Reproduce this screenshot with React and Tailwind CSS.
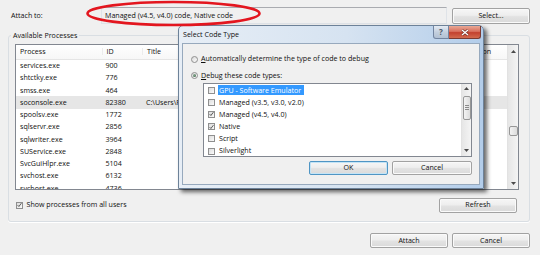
import React from "react";

const processes = [
  { name: "services.exe", id: "900" },
  { name: "shtctky.exe", id: "776" },
  { name: "smss.exe", id: "464" },
  { name: "soconsole.exe", id: "82380", title: "C:\\Users\\Public\\soconsole.exe", selected: true },
  { name: "spoolsv.exe", id: "1772" },
  { name: "sqlservr.exe", id: "2856" },
  { name: "sqlwriter.exe", id: "3964" },
  { name: "SUService.exe", id: "2848" },
  { name: "SvcGuiHlpr.exe", id: "5104" },
  { name: "svchost.exe", id: "6132" },
  { name: "svchost.exe", id: "4736" },
];

const codeTypes = [
  { label: "GPU - Software Emulator", checked: false, active: true },
  { label: "Managed (v3.5, v3.0, v2.0)", checked: false },
  { label: "Managed (v4.5, v4.0)", checked: true },
  { label: "Native", checked: true },
  { label: "Script", checked: false },
  { label: "Silverlight", checked: false },
];

const WinButton = ({ children, className = "", primary = false }) => (
  <div
    className={`flex items-center justify-center rounded-[2px] border ${
      primary
        ? "border-[#4f95c4] shadow-[inset_0_0_0_1px_#c4e4f6]"
        : "border-[#a2a2a2] shadow-[inset_0_0_0_1px_#fafafa]"
    } bg-[linear-gradient(#f6f6f6,#eeeeee_45%,#e2e2e2_55%,#dadada)] ${className}`}
  >
    {children}
  </div>
);

const Check = ({ checked }) => (
  <span className="flex items-center justify-center w-[7px] h-[7px] shrink-0 border border-[#8f8f8f] bg-[linear-gradient(135deg,#dcdcdc,#fbfbfb)]">
    {checked && (
      <svg width="6" height="6" viewBox="0 0 6 6">
        <path d="M0.8 3.2 L2.3 4.8 L5.3 0.8" stroke="#3a3a3a" strokeWidth="1" fill="none" />
      </svg>
    )}
  </span>
);

const Radio = ({ checked }) => (
  <span className="flex items-center justify-center w-[7px] h-[7px] shrink-0 rounded-full border border-[#8f8f8f] bg-[linear-gradient(135deg,#dadada,#fbfbfb)]">
    {checked && <span className="w-[3.5px] h-[3.5px] rounded-full bg-[radial-gradient(circle_at_35%_35%,#8fb59a,#2f5138)]" />}
  </span>
);

const Arrow = ({ down = false }) => (
  <svg width="5" height="3" viewBox="0 0 5 3">
    <path d={down ? "M0 0H5L2.5 3Z" : "M0 3H5L2.5 0Z"} fill="#4a4a4a" />
  </svg>
);

const ProcessList = () => (
  <div className="mt-[4px] ml-[6px] mr-[10px] h-[146px] flex border border-[#828790] bg-white overflow-hidden">
    <div className="flex-1 flex flex-col min-w-0">
      <div className="h-[14.5px] shrink-0 flex items-center border-b border-[#e5e5e5] bg-[linear-gradient(#ffffff,#f7f7f7)]">
        <span className="w-[85.5px] pl-[4px] shrink-0">Process</span>
        <span className="w-[40.5px] pl-[4px] shrink-0 border-l border-[#ececec]">ID</span>
        <span className="w-[319px] pl-[4px] shrink-0 border-l border-[#ececec]">Title</span>
        <span className="pl-[4px] shrink-0 border-l border-[#ececec]">Session</span>
      </div>
      {processes.map((p, i) => (
        <div
          key={i}
          className={`h-[12.25px] shrink-0 flex items-center whitespace-nowrap ${p.selected ? "bg-[#e6e6e6]" : ""}`}
        >
          <span className="w-[85.5px] pl-[4px] shrink-0">{p.name}</span>
          <span className="w-[40.5px] pl-[4px] shrink-0">{p.id}</span>
          <span className="pl-[4px]">{p.title || ""}</span>
        </div>
      ))}
    </div>
    <div className="w-[11px] shrink-0 flex flex-col bg-[linear-gradient(to_right,#e6e6e6,#f4f4f4)] border-l border-[#e2e2e2]">
      <div className="h-[12px] flex items-center justify-center">
        <Arrow />
      </div>
      <div className="flex-1">
        <div className="mt-[69px] mx-[0.5px] h-[9.5px] rounded-[2px] border border-[#979797] bg-[linear-gradient(to_right,#f3f3f3,#dcdcdc)]" />
      </div>
      <div className="h-[12px] flex items-center justify-center">
        <Arrow down />
      </div>
    </div>
  </div>
);

const CodeTypeDialog = () => (
  <div className="absolute left-[178px] top-[25px] w-[306px] h-[164px] flex flex-col rounded-t-[5px] border border-[#6d8299] bg-[linear-gradient(to_right,#e7eef6,#d6e3f1_55%,#b3cdea)] shadow-[3px_3px_4px_rgba(0,0,0,0.6)]">
    <div className="h-[17px] shrink-0 flex items-start">
      <span className="self-center pl-[4px]">Select Code Type</span>
      <div className="ml-auto mr-[2px] flex">
        <div className="w-[16px] h-[13px] flex items-center justify-center rounded-bl-[3px] border border-t-0 border-[#7385a0] bg-[linear-gradient(#e4ebf3,#c4d0de_50%,#b2c1d3)] text-[8px] font-bold text-[#4d5866]">
          ?
        </div>
        <div className="w-[32px] h-[13px] flex items-center justify-center rounded-br-[3px] border border-t-0 border-l-0 border-[#7a3a32] bg-[linear-gradient(#e9a996,#d8705e_45%,#c3412f_55%,#d26a4e)]">
          <svg width="8" height="7" viewBox="0 0 8 7">
            <path d="M1 1 L7 6 M7 1 L1 6" stroke="#6b2a22" strokeWidth="2.4" />
            <path d="M1 1 L7 6 M7 1 L1 6" stroke="#ffffff" strokeWidth="1.3" />
          </svg>
        </div>
      </div>
    </div>
    <div className="mx-[3px] mb-[3px] flex-1 flex flex-col border border-[#97a9bd] bg-[#f0f0f0]">
      <div className="mt-[10px] h-[10px] pl-[8px] flex items-center">
        <Radio />
        <span className="ml-[3px]">
          <span className="underline">A</span>utomatically determine the type of code to debug
        </span>
      </div>
      <div className="mt-[6.7px] h-[10px] pl-[8px] flex items-center">
        <Radio checked />
        <span className="ml-[3px]">
          <span className="underline">D</span>ebug these code types:
        </span>
      </div>
      <div className="mt-[2.3px] ml-[20px] mr-[7px] h-[74px] flex border border-[#828790] bg-white">
        <div className="flex-1 flex flex-col">
          {codeTypes.map((c) => (
            <div key={c.label} className="h-[12.2px] shrink-0 flex items-center pl-[4px] whitespace-nowrap">
              <Check checked={c.checked} />
              <span
                className={`ml-[2.5px] h-[10px] flex items-center pl-[1.5px] pr-[3px] ${
                  c.active ? "bg-[#3399ff] text-white" : ""
                }`}
              >
                {c.label}
              </span>
            </div>
          ))}
        </div>
        <div className="w-[10px] shrink-0 flex flex-col bg-[linear-gradient(to_right,#e6e6e6,#f4f4f4)] border-l border-[#e2e2e2]">
          <div className="h-[10px] flex items-center justify-center">
            <Arrow />
          </div>
          <div className="flex-1">
            <div className="mt-[2px] mx-[0.5px] h-[24px] flex flex-col items-center justify-center gap-[1px] rounded-[2px] border border-[#979797] bg-[linear-gradient(to_right,#f3f3f3,#dcdcdc)]">
              <span className="w-[4px] h-[1px] bg-[#8a8a8a]" />
              <span className="w-[4px] h-[1px] bg-[#8a8a8a]" />
              <span className="w-[4px] h-[1px] bg-[#8a8a8a]" />
            </div>
          </div>
          <div className="h-[10px] flex items-center justify-center">
            <Arrow down />
          </div>
        </div>
      </div>
      <div className="mt-[4px] mr-[7px] h-[14px] flex justify-end gap-[4px]">
        <WinButton primary className="w-[79px] h-full">OK</WinButton>
        <WinButton className="w-[80px] h-full">Cancel</WinButton>
      </div>
    </div>
  </div>
);

export default function App() {
  return (
    <div className="relative w-[540px] h-[255px] overflow-hidden bg-[#f0f0f0] font-['Open_Sans',sans-serif] text-[7.1px] leading-none text-[#0f0f0f]">
      <div className="flex flex-col pt-[7px]">
        <div className="h-[17px] flex items-center pr-[10px]">
          <span className="w-[101px] pl-[11px] shrink-0">Attach to:</span>
          <div className="flex-1 h-full flex items-center pl-[3px] border border-[#dfe3e8] border-t-[#a9abb0]">
            Managed (v4.5, v4.0) code, Native code
          </div>
          <WinButton className="ml-[5px] w-[78px] h-[16px]">Select...</WinButton>
        </div>

        <fieldset className="mt-[6px] ml-[8px] mr-[10px] min-w-0 border border-[#d9dee3] rounded-[3px] pb-[8px] shadow-[0_1px_0_#ffffff]">
          <legend className="ml-[2px] px-[2px] leading-[10px]">Available Processes</legend>
          <ProcessList />
          <div className="mt-[7.5px] ml-[6px] mr-[12px] h-[15px] flex items-center justify-between">
            <div className="flex items-center gap-[3.5px] pl-[1px]">
              <Check checked />
              <span>Show processes from all users</span>
            </div>
            <WinButton className="w-[78px] h-full">Refresh</WinButton>
          </div>
        </fieldset>

        <div className="mt-[11.5px] pr-[10px] h-[15px] flex justify-end gap-[4px]">
          <WinButton className="w-[78px] h-full">Attach</WinButton>
          <WinButton className="w-[78px] h-full">Cancel</WinButton>
        </div>
      </div>

      <CodeTypeDialog />

      <svg className="absolute left-0 top-0 pointer-events-none" width="540" height="255">
        <ellipse cx="173.5" cy="13.5" rx="86" ry="11.5" fill="none" stroke="#e3161f" strokeWidth="2.6" />
      </svg>
    </div>
  );
}
